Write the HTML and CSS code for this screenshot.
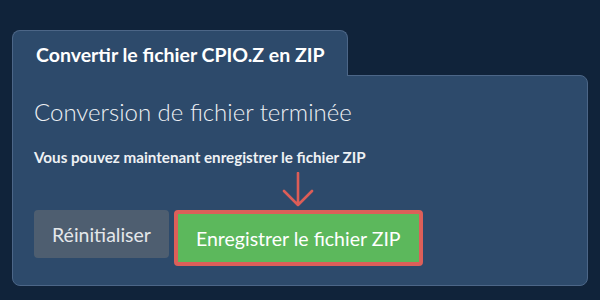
FILE: index.html
```html
<!DOCTYPE html>
<html lang="fr">
<head>
  <meta charset="utf-8">
  <title>Convertir le fichier CPIO.Z en ZIP</title>
  <link rel="stylesheet" href="styles.css">
</head>
<body>
  <div class="converter">
    <div class="tab">Convertir le fichier CPIO.Z en ZIP</div>
    <div class="panel">
      <h2 class="panel-title">Conversion de fichier terminée</h2>
      <p class="panel-note">Vous pouvez maintenant enregistrer le fichier ZIP</p>
      <div class="actions">
        <button class="btn btn-reset">Réinitialiser</button>
        <div class="save-wrap">
          <svg class="arrow" width="32" height="36" viewBox="0 0 32 36">
            <path d="M16 1 V33 M2 19 L16 33 L30 19" fill="none" stroke="#dc5d57" stroke-width="2.6" stroke-linecap="round" stroke-linejoin="round"/>
          </svg>
          <button class="btn btn-save">Enregistrer le fichier ZIP</button>
        </div>
      </div>
    </div>
  </div>
</body>
</html>
```

FILE: styles.css
```css
body {
  margin: 0;
  background-color: #10233a;
  font-family: Lato, "Open Sans", sans-serif;
  color: #ffffff;
}
.converter {
  padding: 30px 12px 0 12px;
}
.tab {
  position: relative;
  z-index: 1;
  width: 336px;
  height: 46px;
  box-sizing: border-box;
  padding: 12px 0 0 23px;
  margin-bottom: -1px;
  background-color: #2d4a6b;
  border: 1px solid #4c6687;
  border-bottom: none;
  border-radius: 8px 8px 0 0;
  font-size: 19.5px;
  font-weight: 700;
}
.panel {
  height: 211px;
  box-sizing: border-box;
  padding: 21px 20px 0 21px;
  background-color: #2d4a6b;
  border: 1px solid #4c6687;
  border-radius: 0 8px 8px 8px;
}
.panel-title {
  margin: 0;
  font-size: 24px;
  font-weight: 300;
  color: #eef1f4;
}
.panel-note {
  margin: 22px 0 0 0;
  font-size: 15.2px;
  font-weight: 700;
  color: #eef1f4;
}
.actions {
  display: flex;
  align-items: flex-start;
  gap: 5px;
  margin-top: 44px;
}
.btn {
  font-family: Lato, "Open Sans", sans-serif;
  font-size: 19.5px;
  border-radius: 4px;
  cursor: pointer;
}
.btn-reset {
  height: 48px;
  padding: 0 18px;
  border: none;
  background-color: #4e5e70;
  color: #e4e7ea;
}
.save-wrap {
  position: relative;
}
.arrow {
  position: absolute;
  left: 50%;
  top: -38px;
  transform: translateX(-50%);
}
.btn-save {
  height: 56px;
  padding: 0 18px;
  border: 4px solid #dc5f59;
  background-color: #5cb85c;
  color: #ffffff;
}
```
